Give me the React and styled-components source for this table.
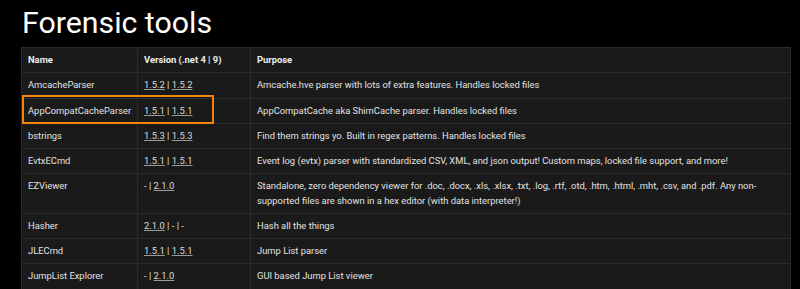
import React from "react";
import styled, { createGlobalStyle } from "styled-components";

const GlobalStyle = createGlobalStyle`
	body {
		margin: 0;
		background: #000;
		font-family: Roboto, "Liberation Sans", sans-serif;
	}
`

const Page = styled.div`
	position: relative;
	padding: 5px 9px 0 21px;
	background: #000;
	color: #e6e6e6;
	min-height: 289px;
	box-sizing: border-box;
`

const Title = styled.h1`
	margin: 0 0 7px 1px;
	font-size: 30.3px;
	font-weight: 400;
	line-height: 35px;
	color: #fff;
`

const Table = styled.table`
	width: 770px;
	border-collapse: collapse;
	background: #1a1a1a;
	font-size: 9.4px;
	line-height: 14.25px;
	table-layout: fixed;
`

const Col = styled.col`
	width: ${(p) => p.$w || "auto"};
`

const HeadCell = styled.th`
	text-align: left;
	font-weight: 700;
	color: #eee;
	padding: 5px 6px;
	border: 1px solid #2b2b2b;
	vertical-align: top;
`

const Cell = styled.td`
	padding: 5px 6px;
	border: 1px solid #2b2b2b;
	vertical-align: top;
	color: #e2e2e2;
`

const VersionLink = styled.a`
	color: #dcdcdc;
	text-decoration: underline;
	text-decoration-color: #9a9a9a;
`

const Highlight = styled.div`
	position: absolute;
	left: 22px;
	top: 95px;
	width: 188px;
	height: 25px;
	border: 2px solid #f7830f;
	pointer-events: none;
`

const tools = [
	{ name: "AmcacheParser", v: ["1.5.2", "1.5.2"], purpose: "Amcache.hve parser with lots of extra features. Handles locked files" },
	{ name: "AppCompatCacheParser", v: ["1.5.1", "1.5.1"], purpose: "AppCompatCache aka ShimCache parser. Handles locked files" },
	{ name: "bstrings", v: ["1.5.3", "1.5.3"], purpose: "Find them strings yo. Built in regex patterns. Handles locked files" },
	{ name: "EvtxECmd", v: ["1.5.1", "1.5.1"], purpose: "Event log (evtx) parser with standardized CSV, XML, and json output! Custom maps, locked file support, and more!" },
	{ name: "EZViewer", v: ["-", "2.1.0"], purpose: "Standalone, zero dependency viewer for .doc, .docx, .xls, .xlsx, .txt, .log, .rtf, .otd, .htm, .html, .mht, .csv, and .pdf. Any non-supported files are shown in a hex editor (with data interpreter!)" },
	{ name: "Hasher", v: ["2.1.0", "-", "-"], purpose: "Hash all the things" },
	{ name: "JLECmd", v: ["1.5.1", "1.5.1"], purpose: "Jump List parser" },
	{ name: "JumpList Explorer", v: ["-", "2.1.0"], purpose: "GUI based Jump List viewer" },
]

const Versions = ({ list }) => (
	<>
		{list.map((v, i) => (
			<React.Fragment key={i}>
				{i > 0 && " | "}
				{v === "-" ? "-" : <VersionLink href="#">{v}</VersionLink>}
			</React.Fragment>
		))}
	</>
)

const App = () => {
	return (
		<Page>
			<GlobalStyle />
			<Title>Forensic tools</Title>
			<Table>
				<colgroup>
					<Col $w="116px" />
					<Col $w="113px" />
					<Col />
				</colgroup>
				<thead>
					<tr>
						<HeadCell>Name</HeadCell>
						<HeadCell>Version (.net 4 | 9)</HeadCell>
						<HeadCell>Purpose</HeadCell>
					</tr>
				</thead>
				<tbody>
					{tools.map((t) => (
						<tr key={t.name}>
							<Cell>{t.name}</Cell>
							<Cell><Versions list={t.v} /></Cell>
							<Cell>{t.purpose}</Cell>
						</tr>
					))}
				</tbody>
			</Table>
			<Highlight />
		</Page>
	);
};

export default App;
